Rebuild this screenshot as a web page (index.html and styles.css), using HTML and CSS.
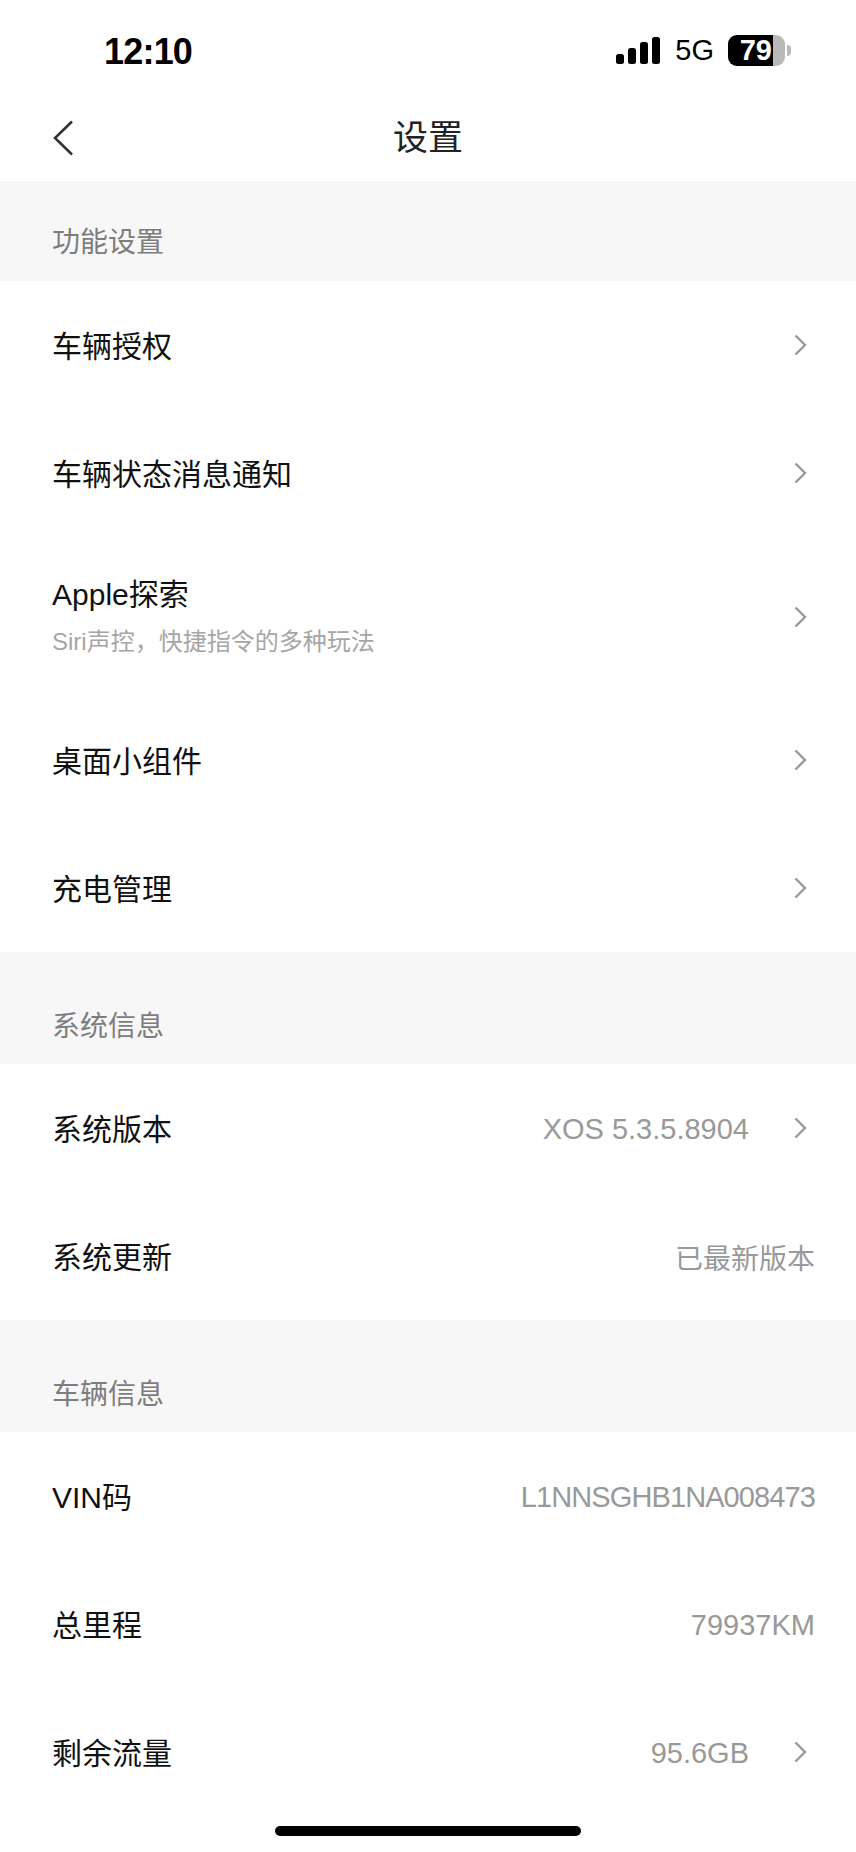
FILE: index.html
```html
<!DOCTYPE html>
<html lang="zh-CN">
<head>
<meta charset="UTF-8">
<title>设置</title>
<link rel="stylesheet" href="styles.css">
</head>
<body>
<svg class="defs" width="0" height="0">
  <symbol id="chevron" viewBox="0 0 13 22"><path d="M1.5 1.5 L11 11 L1.5 20.5" fill="none" stroke="#999" stroke-width="2.4"/></symbol>
</svg>

<div class="status-bar">
  <div class="time">12:10</div>
  <div class="status-right">
    <div class="signal"><span class="b1"></span><span class="b2"></span><span class="b3"></span><span class="b4"></span></div>
    <div class="net">5G</div>
    <div class="battery"><div class="battery-fill">79</div></div>
    <div class="battery-nub"></div>
  </div>
</div>

<div class="nav">
  <svg class="back" width="22" height="36" viewBox="0 0 22 36"><path d="M20 1.5 L3 18 L20 34.5" fill="none" stroke="#333" stroke-width="2.6"/></svg>
  <div class="nav-title">设置</div>
</div>

<div class="section first">功能设置</div>
<div class="row"><div class="label">车辆授权</div><svg class="arrow"><use href="#chevron"/></svg></div>
<div class="row"><div class="label">车辆状态消息通知</div><svg class="arrow"><use href="#chevron"/></svg></div>
<div class="row tall">
  <div>
    <div class="label">Apple探索</div>
    <div class="sub">Siri声控，快捷指令的多种玩法</div>
  </div>
  <svg class="arrow"><use href="#chevron"/></svg>
</div>
<div class="row"><div class="label">桌面小组件</div><svg class="arrow"><use href="#chevron"/></svg></div>
<div class="row"><div class="label">充电管理</div><svg class="arrow"><use href="#chevron"/></svg></div>

<div class="section">系统信息</div>
<div class="row"><div class="label">系统版本</div><div class="value">XOS 5.3.5.8904</div><svg class="arrow"><use href="#chevron"/></svg></div>
<div class="row"><div class="label">系统更新</div><div class="value end cn">已最新版本</div></div>

<div class="section">车辆信息</div>
<div class="row"><div class="label">VIN码</div><div class="value end vin">L1NNSGHB1NA008473</div></div>
<div class="row"><div class="label">总里程</div><div class="value end">79937KM</div></div>
<div class="row"><div class="label">剩余流量</div><div class="value">95.6GB</div><svg class="arrow"><use href="#chevron"/></svg></div>

<div class="home-bar"></div>
</body>
</html>
```

FILE: styles.css
```css
* { box-sizing: border-box; }
html, body { margin: 0; padding: 0; }
body { width: 856px; height: 1852px; overflow: hidden; background-color: #fff; color: #111; font-family: "Liberation Sans", "Noto Sans CJK SC", sans-serif; }
.defs { display: block; height: 0; }

.status-bar { height: 100px; display: flex; justify-content: space-between; align-items: center; padding: 0 65px 0 104px; }
.time { font-size: 36px; font-weight: bold; color: #000; letter-spacing: -0.8px; padding-top: 4px; }
.status-right { display: flex; align-items: center; }
.signal { display: flex; align-items: flex-end; gap: 4px; height: 27px; margin-right: 15px; }
.signal span { display: block; width: 8px; background-color: #000; border-radius: 2.5px; }
.b1 { height: 10px; }
.b2 { height: 16px; }
.b3 { height: 22px; }
.b4 { height: 27px; }
.net { font-size: 29px; color: #000; margin-right: 14px; }
.battery { width: 57px; height: 31px; border-radius: 9px; background-color: #b9b9b9; overflow: hidden; }
.battery-fill { width: 45px; height: 31px; background-color: #000; color: #fff; font-size: 29px; font-weight: bold; line-height: 31px; text-align: right; padding-right: 1px; }
.battery-nub { width: 4px; height: 11px; margin-left: 2px; background-color: #b9b9b9; border-radius: 0 6px 6px 0; }

.nav { height: 81px; position: relative; display: flex; justify-content: center; padding-top: 12px; }
.back { position: absolute; left: 52px; top: 20px; }
.nav-title { font-size: 35px; line-height: 52px; color: #222; }

.section { height: 112px; padding: 55px 0 0 52px; background-color: #f7f7f7; color: #7d7d7d; font-size: 28px; line-height: 40px; }
.section.first { height: 100px; padding-top: 42px; }

.row { height: 128px; display: flex; align-items: center; padding: 0 41px 0 52px; }
.row.tall { height: 159px; justify-content: space-between; }
.label { font-size: 30px; color: #111; line-height: 44px; padding-top: 3px; }
.tall .label { padding-top: 0; }
.sub { font-size: 24px; color: #a6a6a6; line-height: 34px; margin-top: 8px; padding-bottom: 1px; }
.value { margin-left: auto; padding-top: 2px; font-size: 29px; color: #999; }
.value.cn { font-size: 28px; }
.value.vin { letter-spacing: -0.9px; }
.arrow { width: 13px; height: 22px; margin: 0 8px 0 45px; flex-shrink: 0; }
.row .label + .arrow { margin-left: auto; }

.home-bar { width: 306px; height: 10px; margin: 10px auto 0; border-radius: 5px; background-color: #000; }
```
